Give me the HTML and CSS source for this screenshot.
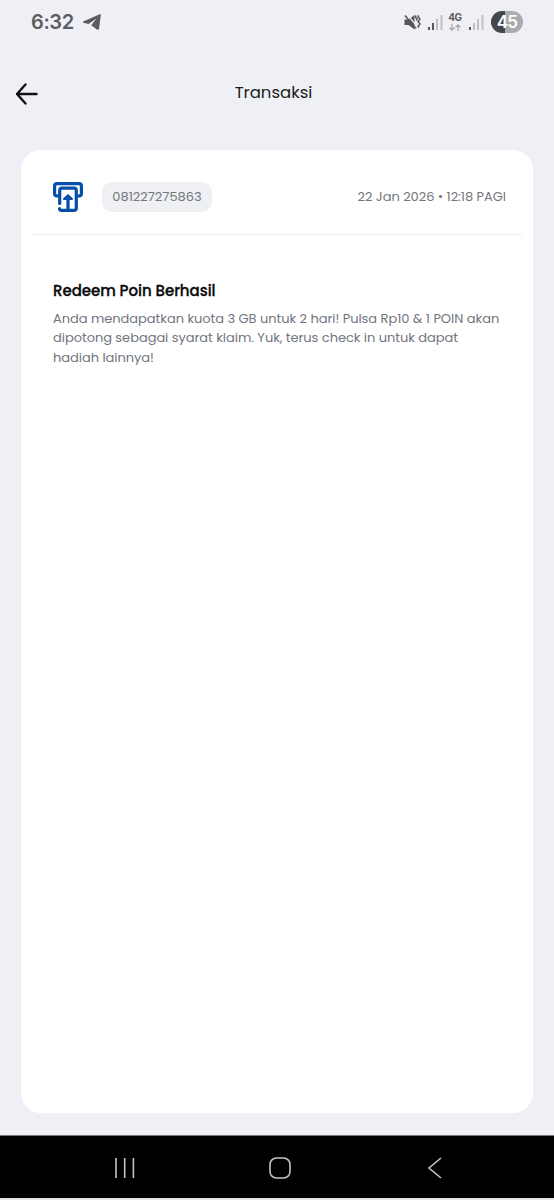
FILE: index.html
```
<!DOCTYPE html>
<html lang="id">
<head>
  <meta charset="UTF-8" />
  <meta name="viewport" content="width=device-width, initial-scale=1.0" />
  <title>Transaksi</title>
  <link rel="stylesheet" href="styles.css">
</head>
<body>
  <div class="status-bar">
    <span class="clock">6:32</span>
    <svg class="telegram" width="20" height="18" viewBox="0 0 20 18">
      <path d="M1.2 8.600 17.800 1.300q1.200-.4 1 .9L17 15.800q-.4 1.500-1.700.9L9.200 12.200 14.500 5.400 6.500 10.900 1.400 9.700q-1-.5-.2-1.100z" />
    </svg>
    <div class="status-icons">
      <svg class="mute" width="17" height="17" viewBox="0 0 17 17">
        <path class="solid" d="M.5 5.500h4L10.500 1v14.500l-6-4.500h-4z" />
        <path class="cut" d="M2.600 0 13 12" />
        <path class="line" d="M1 1.500 12 14.500" />
        <path class="wave" d="M12.200 1.500q-1.500 1.200 0 2.400t0 2.400M15 1.500q-1.800 1.200 0 2.400t0 2.400 0 2.400 0 2.400 0 2.400" />
      </svg>
      <svg class="signal" width="15" height="15" viewBox="0 0 15 15">
        <path class="on" d="M0 12h2v3H0zM4 8h2v7H4z" />
        <path class="off" d="M8 4h2v11H8zM12.500 0h2v15h-2z" />
      </svg>
      <div class="network">
        <span>4G</span>
        <svg width="12" height="7" viewBox="0 0 12 7">
          <path d="M3 0v6M.5 3.700 3 6.200l2.500-2.500M9 7V1M6.500 3.300 9 .8l2.500 2.500" />
        </svg>
      </div>
      <svg class="signal" width="15" height="15" viewBox="0 0 15 15">
        <path class="on" d="M0 12h2v3H0z" />
        <path class="off" d="M4 8h2v7H4zM8 4h2v11H8zM12.500 0h2v15h-2z" />
      </svg>
      <span class="battery">45</span>
    </div>
  </div>

  <header class="top-bar">
    <svg class="back" width="24" height="24" viewBox="0 0 24 24">
      <path d="M10.500 2.500 2 12l8.500 9.500M2 12h19.500" />
    </svg>
    <h1>Transaksi</h1>
  </header>

  <main class="card">
    <div class="card-head">
      <svg class="redeem-icon" width="30" height="30" viewBox="0 0 30 30">
        <path d="M5 14H4a2.400 2.400 0 0 1-2.400-2.400V4A2.400 2.400 0 0 1 4 1.600h22A2.400 2.400 0 0 1 28.400 4v7.600A2.400 2.400 0 0 1 26 14h-1" />
        <path d="M6.700 21.500V8.500A2.300 2.300 0 0 1 9 6.200h12a2.300 2.300 0 0 1 2.300 2.300V26a2.300 2.300 0 0 1-2.300 2.300H8.500Q6.500 28.300 6.500 26.500" />
        <path d="M15 28V15" />
        <path class="arrow-head" d="M15 13.200 11 17h8z" />
      </svg>
      <span class="phone">081227275863</span>
      <span class="date">22 Jan 2026 • 12:18 PAGI</span>
    </div>
    <div class="message">
      <h2>Redeem Poin Berhasil</h2>
      <p>
        Anda mendapatkan kuota 3 GB untuk 2 hari! Pulsa Rp10 &amp; 1 POIN akan<br>
        dipotong sebagai syarat klaim. Yuk, terus check in untuk dapat<br>
        hadiah lainnya!
      </p>
    </div>
  </main>

  <nav class="nav-bar">
    <svg width="22" height="22" viewBox="0 0 22 22"><path d="M2 1v20M10.700 1v20M19.400 1v20" /></svg>
    <svg width="22" height="22" viewBox="0 0 22 22"><rect x="1" y="1" width="20" height="20" rx="6.500" /></svg>
    <svg width="22" height="22" viewBox="0 0 22 22"><path d="M17 1 5 11l12 10" /></svg>
  </nav>
</body>
</html>
```
FILE: styles.css
```
* {
  box-sizing: border-box;
  margin: 0;
  padding: 0;
}

body {
  height: 1200px;
  font-family: Poppins, Inter, sans-serif;
  background: #eff0f5;
  color: #1a1b20;
  display: flex;
  flex-direction: column;
  overflow: hidden;
}

svg {
  display: block;
  flex-shrink: 0;
  fill: none;
}

.status-bar {
  height: 44px;
  padding: 0 31px 0 31px;
  display: flex;
  align-items: center;
  color: #5b5c5f;
  font-family: Inter, sans-serif;
}

.clock {
  width: 43px;
  font-size: 20px;
  font-weight: 600;
  letter-spacing: -0.4px;
  white-space: nowrap;
}

.telegram {
  margin-left: 8px;
  fill: #5b5c5f;
}

.status-icons {
  margin-left: auto;
  display: flex;
  align-items: center;
}

.mute .solid {
  fill: #57585b;
}

.mute .cut {
  stroke: #eff0f5;
  stroke-width: 1.2;
}

.mute .line,
.mute .wave {
  stroke: #57585b;
  stroke-width: 1.6;
}

.signal {
  margin-left: 7px;
}

.signal .on {
  fill: #57585b;
}

.signal .off {
  fill: #c0c1c4;
}

.network {
  width: 14px;
  margin-left: 5px;
  display: flex;
  flex-direction: column;
  align-items: center;
  font-size: 10px;
  line-height: 9px;
  font-weight: 700;
  letter-spacing: -0.3px;
}

.network svg {
  margin-top: 2px;
  stroke: #a5a6a9;
  stroke-width: 1.2;
}

.battery {
  width: 32px;
  height: 22px;
  margin-left: 7px;
  border-radius: 11px;
  background: linear-gradient(90deg, #454649 45%, #aaabad 45%);
  color: #fff;
  font-size: 17px;
  font-weight: 600;
  line-height: 22px;
  letter-spacing: -0.8px;
  text-align: center;
}

.top-bar {
  height: 106px;
  padding: 0 15px;
  display: grid;
  grid-template-columns: 24px 1fr 24px;
  align-items: start;
}

.back {
  margin-top: 38px;
  stroke: #101115;
  stroke-width: 2.4;
  stroke-linecap: round;
  stroke-linejoin: round;
}

h1 {
  margin-top: 37px;
  padding-right: 7px;
  font-size: 16.5px;
  font-weight: 400;
  line-height: 24px;
  text-align: center;
}

.card {
  flex: 1;
  margin: 0 21px 22px;
  background: #fff;
  border-radius: 20px;
}

.card-head {
  height: 85px;
  margin: 0 11px;
  padding: 9px 16px 0 21px;
  border-bottom: 1px solid #ececee;
  display: flex;
  align-items: center;
}

.redeem-icon {
  stroke: #064fa8;
  stroke-width: 3.2;
  stroke-linecap: round;
  stroke-linejoin: round;
}

.redeem-icon .arrow-head {
  fill: #064fa8;
  stroke-width: 2;
}

.phone {
  width: 110px;
  height: 30px;
  margin-left: 19px;
  border-radius: 10px;
  background: #eff0f4;
  color: #737780;
  font-size: 13px;
  line-height: 30px;
  text-align: center;
}

.date {
  margin-left: auto;
  padding-top: 1px;
  color: #73767d;
  font-size: 13px;
  letter-spacing: -0.04px;
}

.message {
  padding: 45px 32px 0;
}

h2 {
  color: #08090b;
  font-size: 15px;
  font-weight: 500;
  line-height: 22px;
  letter-spacing: -0.04px;
  -webkit-text-stroke: 0.3px #08090b;
  white-space: nowrap;
}

p {
  margin-top: 7px;
  color: #70757e;
  font-size: 13px;
  line-height: 19.3px;
  letter-spacing: -0.04px;
  white-space: nowrap;
}

.nav-bar {
  height: 65px;
  padding: 1px 108px 0 114px;
  background: #000;
  border-top: 1px solid #777;
  border-bottom: 2px solid #e4e4e6;
  display: flex;
  justify-content: space-between;
  align-items: center;
}

.nav-bar svg {
  stroke: #c4c4c4;
  stroke-width: 1.6;
}
```
